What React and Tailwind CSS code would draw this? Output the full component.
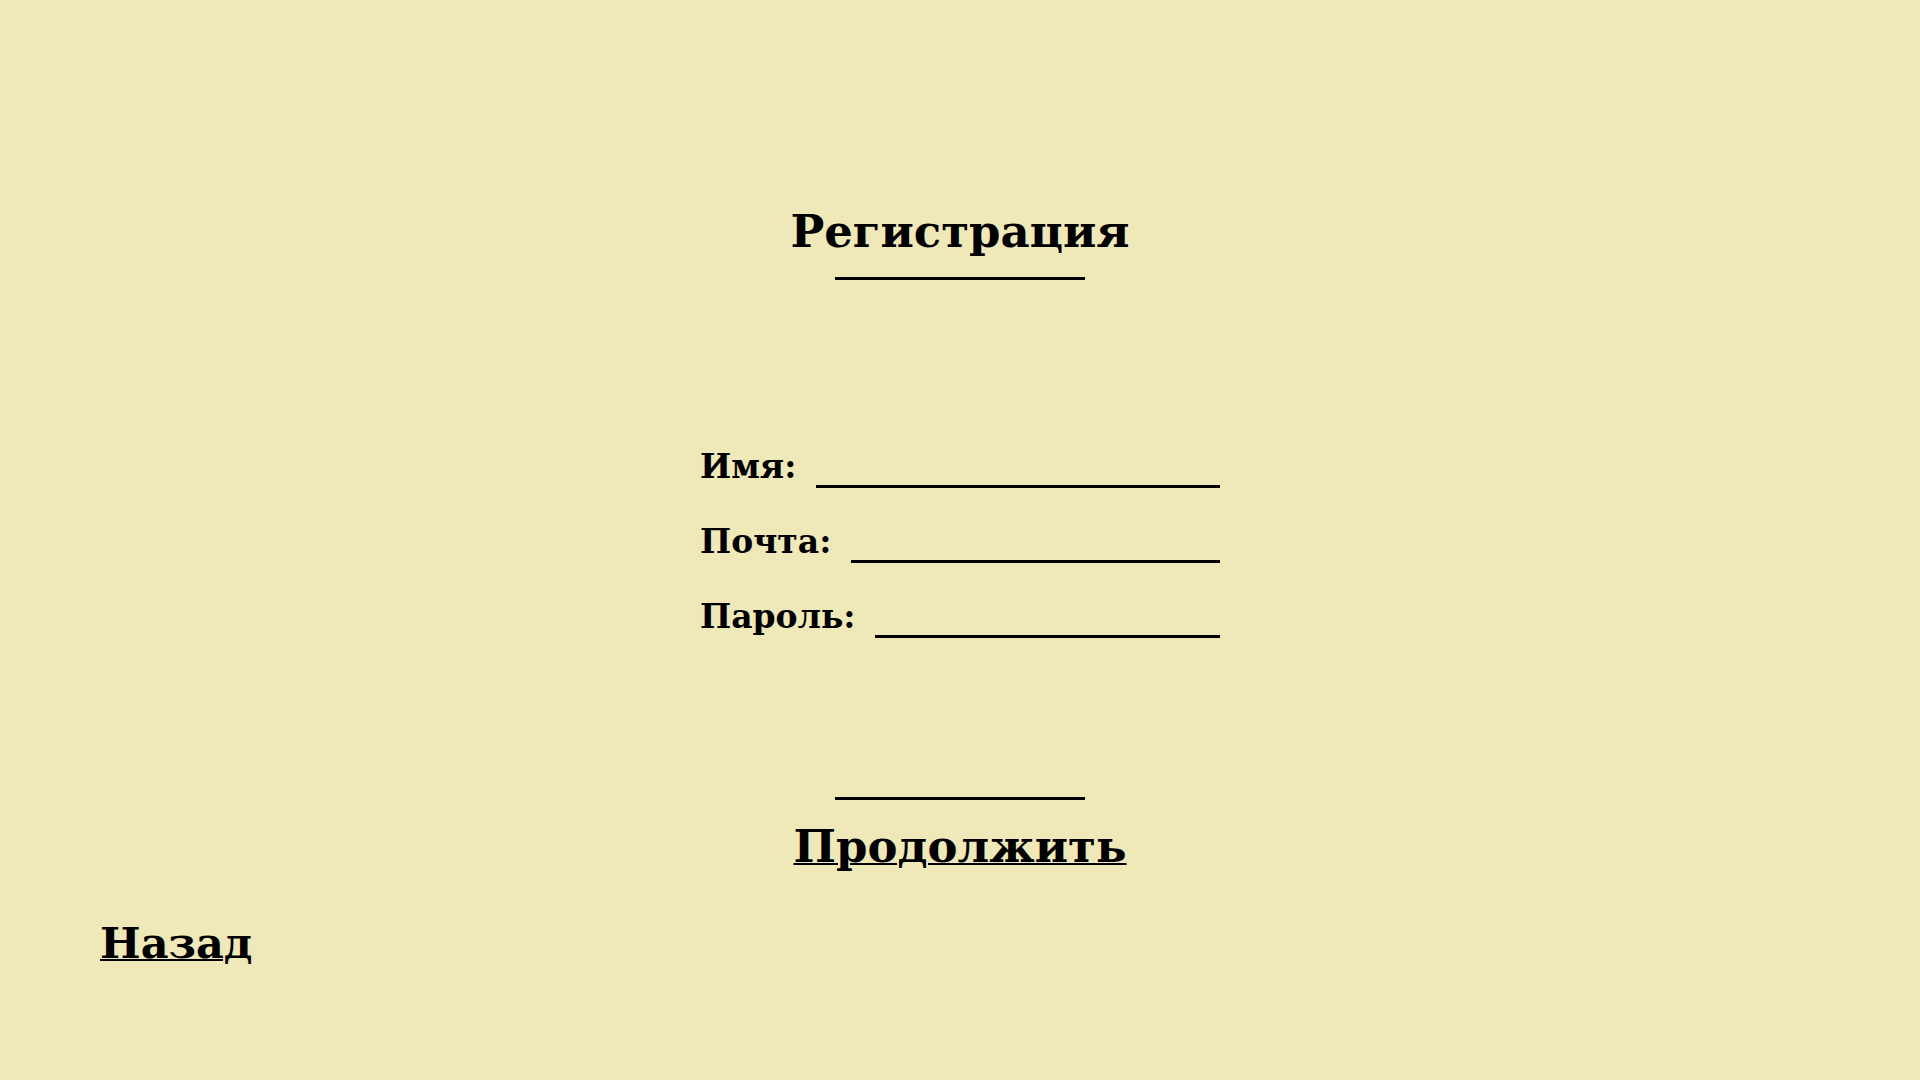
import React, { useState } from "react";

const fields = [
  { name: "name", label: "Имя:", type: "text" },
  { name: "email", label: "Почта:", type: "email" },
  { name: "password", label: "Пароль:", type: "password" },
];

const App = () => {
  const [values, setValues] = useState({ name: "", email: "", password: "" });

  const handleChange = (e) => {
    setValues({ ...values, [e.target.name]: e.target.value });
  };

  return (
    <main
      className="flex h-[1080px] w-full flex-col bg-[#efe8b9] pt-[209px] text-black"
      style={{ fontFamily: '"DejaVu Serif", "Liberation Serif", serif' }}
    >
      <div className="flex flex-col items-center">
        <h1 className="text-[45px] font-bold leading-none">Регистрация</h1>
        <div className="mt-[23px] h-[3px] w-[250px] bg-black"></div>
      </div>

      <form className="mx-auto mt-[167px] flex w-[520px] flex-col gap-[34px]">
        {fields.map((f) => (
          <div key={f.name} className="flex h-[41px] items-start gap-[20px]">
            <label
              htmlFor={f.name}
              className="pt-[3px] text-[33px] font-bold leading-none"
            >
              {f.label}
            </label>
            <input
              id={f.name}
              name={f.name}
              type={f.type}
              value={values[f.name]}
              onChange={handleChange}
              autoComplete="off"
              className="h-[41px] min-w-0 flex-1 border-b-[3px] border-black bg-transparent px-1 text-[24px] outline-none"
            />
          </div>
        ))}
      </form>

      <div className="mt-[159px] flex flex-col items-center">
        <div className="h-[3px] w-[250px] bg-black"></div>
        <button
          type="button"
          className="mt-[24px] text-[45px] font-bold leading-none underline decoration-2"
        >
          Продолжить
        </button>
      </div>

      <div className="mt-[53px] pl-[100px]">
        <a href="#" className="text-[43px] font-bold leading-none underline decoration-2">
          Назад
        </a>
      </div>
    </main>
  );
};

export default App;
